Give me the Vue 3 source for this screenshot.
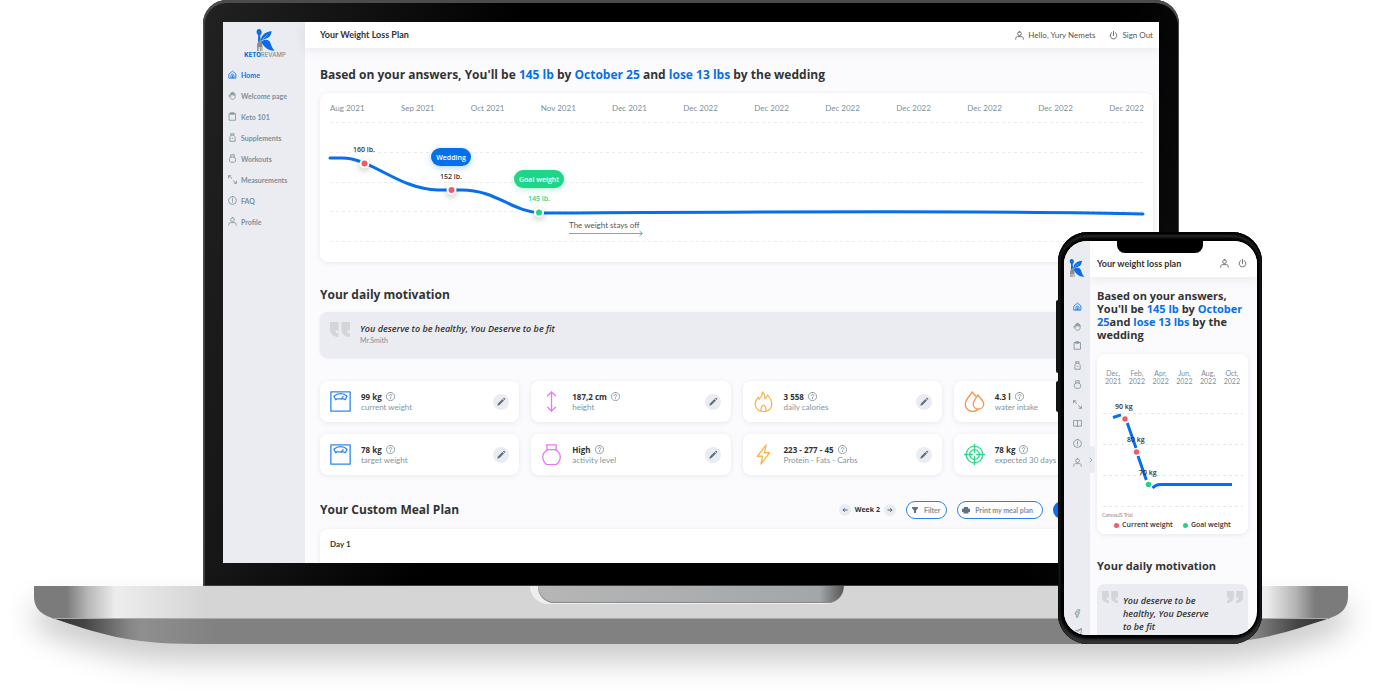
<script setup>
import { h } from 'vue'

const shapes = {
  home: ['M3 10.5 12 3l9 7.500V21.500H3z', 'M8 21v-6a4 4 0 0 1 8 0v6', 'M12 15v6'],
  hand: ['M7 13V6.500a1.500 1.500 0 0 1 3 0V11V4.500a1.500 1.500 0 0 1 3 0V11V5.500a1.500 1.500 0 0 1 3 0V12V8.500a1.500 1.500 0 0 1 3 0V15c0 4-2.500 7-6.500 7S7 20 5 17l-3-4c0-2 2.500-2 3.500-.5L7 14'],
  clipboard: ['M4 4h16v18H4z', 'M8 2h8v4H8z'],
  bottle: ['M8 2h8v4H8z', 'M8 7c-2 2-3 3-3 6v9h14v-9c0-3-1-4-3-6', 'M11 14h2'],
  kettlebell: ['M8 9 7 2h10l-1 7', 'M8 8a8 8 0 0 0-1 14h10a8 8 0 0 0-1-14z'],
  resize: ['M1.500 8V2h6', 'M2 2l8 7', 'M22.500 16v6h-6', 'M22 22l-8-7'],
  info: ['M12 1.500a10.500 10.500 0 1 0 0 21a10.500 10.500 0 0 0 0-21z', 'M12 7v6', 'M12 16v1'],
  user: ['M12 2a5 5 0 1 0 0 10a5 5 0 0 0 0-10z', 'M2 22v-2c0-3 2-5 5-5h10c3 0 5 2 5 5v2'],
  book: ['M12 5C9 3.500 6 3.500 1.500 4v15c4.500-.5 7.500-.5 10.500 1c3-1.500 6-1.500 10.500-1V4C18 3.500 15 3.500 12 5z', 'M12 5v15'],
  power: ['M7 4.500a9 9 0 1 0 10 0', 'M12 1v11'],
  facebook: ['M17 2h-3c-3 0-5 2-5 5v3H6v4h3v8h4v-8h3l1-4h-4V7c0-1 .5-1.500 1.500-1.500H17z'],
  plane: ['M22 2 1.500 10l6 3.500L10 22l4-5 5 3z', 'M22 2 7.500 13.500'],
  help: ['M12 1a11 11 0 1 0 0 22a11 11 0 0 0 0-22z', 'M8.500 9.500c0-4.500 7-4.500 7 0c0 2.500-3.500 2-3.500 4.500', 'M12 17v1'],
  chevron: ['M8 4l8 8-8 8'],
  scale: ['M1 1h22v22H1z', 'M4.500 6c4-4 11-4 15 0l-2 4-2-1H8l-1.500 1z', 'M13 9l2-2.500'],
  height: ['M12 1v22', 'M7.500 5.500 12 1l4.500 4.500', 'M7.500 18.500 12 23l4.500-4.500'],
  flame: ['M11 1c-.5 4-2 6.500-4 8.500L6 7C4 9.500 2.500 11.500 2.500 15c0 5 4 8.500 9.500 8.500s9.500-3.500 9.500-8.500c0-4.500-2-7-5-10.500-.5 2-1 3-2.500 4.500C13 6 13.500 3.500 11 1z', 'M9.500 23c-1-3.500.5-6 2.500-7 2 1 3.500 3.500 2.500 7'],
  bolt: ['M15 1 5 14h6l-2 9 10-13h-6z'],
  drops: ['M16 21c-6 5-14.500 1-14.500-6C1.500 9.500 7 5.500 9.500 1c1 2 2.500 3.500 4 5', 'M16 4.500c2 3.500 6.500 6 6.500 10.500 0 3-2.500 5.500-6 5.500s-6-2.500-6-5.500c0-4.500 3.500-7 5.500-10.500z'],
  target: ['M12 2.500a9.500 9.500 0 1 0 0 19a9.500 9.500 0 0 0 0-19z', 'M12 6.500a5.500 5.500 0 1 0 0 11a5.500 5.500 0 0 0 0-11z', 'M12 .5v9', 'M12 14.500v9', 'M.5 12h9', 'M14.500 12h9'],
  weight: ['M7 7 6.500 1h11L17 7', 'M8 6.500A9.500 9.500 0 0 0 2 14.500c0 4 2 7 4.500 9h11c2.500-2 4.500-5 4.500-9a9.500 9.500 0 0 0-6-8z'],
}

const Icon = (props) =>
  h(
    'svg',
    {
      viewBox: '0 0 24 24',
      fill: 'none',
      stroke: 'currentColor',
      'stroke-width': props.weight || 2.2,
      'stroke-linejoin': 'round',
      'stroke-linecap': 'round',
      'aria-hidden': 'true',
    },
    shapes[props.name].map((d) => h('path', { d })),
  )
Icon.props = ['name', 'weight']

const Logo = () =>
  h('svg', { viewBox: '0 0 19 22', 'aria-hidden': 'true' }, [
    h('path', { fill: '#0b6be8', d: 'M3 0C1.300 0 .5 1.500.6 3.200.8 4.800 1.600 5.600 2.200 6.100L2 13.500 4.700 11 4.200 6.100C5.100 5.500 5.700 4.500 5.700 3.200 5.700 1.500 4.700 0 3 0z' }),
    h('path', { fill: '#0b6be8', d: 'M4.600 12C5.500 6.500 8.500 2.500 15.800 2.200 15.200 3.400 15.200 4.800 14.300 6.600 12.600 9.600 8.500 9.600 4.600 12z' }),
    h('path', { fill: '#0b6be8', d: 'M5 12.500C9 9.800 13 10.200 14.300 13.600 15.200 16.700 16.500 19.700 18.600 21.600 12.500 22 8.500 19 5 12.500z' }),
    h('path', { fill: '#8a8a8c', d: 'M1 22V16.800C1 13.500 3 11.500 6.300 10.800 5 12.800 6.400 14 6.400 16.800V22H5.500V18H4.800V22H3.900V18H3.100V22H2.400V18H1.900V22z' }),
    h('path', { stroke: '#ebecf2', 'stroke-width': 0.5, fill: 'none', d: 'M7 10 11.500 5.500' }),
  ])

const Quote = () =>
  h('svg', { viewBox: '0 0 20 15', fill: 'currentColor', 'aria-hidden': 'true' }, [
    h('path', { d: 'M0 0h8.500v8.500H5.500c0 2 1 3 3 3V15C3.500 15 0 12 0 7.500z' }),
    h('path', { d: 'M11.500 0H20v8.500h-3c0 2 1 3 3 3V15c-5 0-8.500-3-8.500-7.500z' }),
  ])

const menu = [
  { icon: 'home', label: 'Home' },
  { icon: 'hand', label: 'Welcome page' },
  { icon: 'clipboard', label: 'Keto 101' },
  { icon: 'bottle', label: 'Supplements' },
  { icon: 'kettlebell', label: 'Workouts' },
  { icon: 'resize', label: 'Measurements' },
  { icon: 'info', label: 'FAQ' },
  { icon: 'user', label: 'Profile' },
]
const phoneMenu = ['home', 'hand', 'clipboard', 'bottle', 'kettlebell', 'resize', 'book', 'info', 'user']

const months = ['Aug 2021', 'Sep 2021', 'Oct 2021', 'Nov 2021', 'Dec 2021', 'Dec 2022', 'Dec 2022', 'Dec 2022', 'Dec 2022', 'Dec 2022', 'Dec 2022', 'Dec 2022']
const phoneMonths = [['Dec,', '2021'], ['Feb,', '2022'], ['Apr,', '2022'], ['Jun,', '2022'], ['Aug,', '2022'], ['Oct,', '2022']]

const stats = [
  { icon: 'scale', tone: 'blue', value: '99 kg', label: 'current weight' },
  { icon: 'height', tone: 'pink', value: '187,2 cm', label: 'height' },
  { icon: 'flame', tone: 'amber', value: '3 558', label: 'daily calories' },
  { icon: 'drops', tone: 'orange', value: '4.3 l', label: 'water intake' },
  { icon: 'scale', tone: 'blue', value: '78 kg', label: 'target weight' },
  { icon: 'weight', tone: 'pink', value: 'High', label: 'activity level' },
  { icon: 'bolt', tone: 'amber', value: '223 - 277 - 45', label: 'Protein - Fats - Carbs' },
  { icon: 'target', tone: 'green', value: '78 kg', label: 'expected 30 days' },
]
</script>

<template>
  <div class="stage">
    <section class="laptop">
      <div class="lid">
        <div class="screen">
          <aside class="sidebar">
            <a class="brand" href="#" aria-label="Keto Revamp">
              <Logo class="brand-mark" />
              <span class="brand-name"><b>KETO</b>REVAMP</span>
            </a>
            <nav class="menu">
              <a v-for="(item, i) in menu" :key="item.label" href="#" :class="{ active: i === 0 }">
                <Icon :name="item.icon" class="menu-icon" />{{ item.label }}
              </a>
            </nav>
          </aside>

          <div class="main">
            <header class="topbar">
              <span class="page-name">Your Weight Loss Plan</span>
              <div class="account">
                <a href="#"><Icon name="user" class="account-icon" />Hello, Yury Nemets</a>
                <a href="#"><Icon name="power" class="account-icon" />Sign Out</a>
              </div>
            </header>

            <div class="content">
              <h1>Based on your answers, You'll be <em>145 lb</em> by <em>October 25</em> and <em>lose 13 lbs</em> by the wedding</h1>

              <div class="card chart">
                <div class="months">
                  <span v-for="(m, i) in months" :key="i">{{ m }}</span>
                </div>
                <svg class="plot" viewBox="0 0 833 147" role="img" aria-label="Weight forecast">
                  <g stroke="#ebebed" stroke-dasharray="3 3">
                    <path d="M10 7.500H823M10 37.500H823M10 67.500H823M10 96.500H823M10 126.500H823" />
                  </g>
                  <path class="curve" d="M10 43H22C52 43 78 74 118 75H142C176 75 192 97 222 98C420 97 700 95 823 99" />
                  <g class="dots">
                    <circle cx="44.500" cy="48.500" r="5" />
                    <circle cx="131.500" cy="75" r="5" />
                    <circle cx="219" cy="97.500" r="5" />
                  </g>
                  <circle cx="44.500" cy="48.500" r="3" fill="#f05b68" />
                  <circle cx="131.500" cy="75" r="3" fill="#f05b68" />
                  <circle cx="219" cy="97.500" r="3" fill="#1ed688" />
                  <rect class="pill-blue" x="111" y="33" width="40" height="18" rx="9" />
                  <rect class="pill-green" x="194" y="55" width="50" height="18" rx="9" />
                  <g text-anchor="middle" class="tags">
                    <text x="44" y="37">160 lb.</text>
                    <text x="131" y="64">152 lb.</text>
                    <text x="131" y="44.500" class="on-pill">Wedding</text>
                    <text x="219" y="67" class="on-pill">Goal weight</text>
                    <text x="219" y="86" class="goal-value">145 lb.</text>
                  </g>
                  <text class="note" x="249" y="113">The weight stays off</text>
                  <path d="M249 118.500H322M319.500 116 322.500 118.500 319.500 121" fill="none" stroke="#2bd98d" />
                </svg>
              </div>

              <h2>Your daily motivation</h2>
              <blockquote class="quote">
                <Quote class="quote-mark" />
                <div>
                  <p>You deserve to be healthy, You Deserve to be fit</p>
                  <cite>Mr.Smith</cite>
                </div>
              </blockquote>

              <div class="stats">
                <article v-for="(s, i) in stats" :key="i" class="card stat">
                  <Icon :name="s.icon" weight="1.500" :class="['stat-icon', s.tone]" />
                  <div class="stat-text">
                    <strong>{{ s.value }}
                      <button class="help" :aria-label="'About ' + s.label"><Icon name="help" /></button>
                    </strong>
                    <span>{{ s.label }}</span>
                  </div>
                  <button class="edit" :aria-label="'Edit ' + s.label">
                    <svg viewBox="0 0 16 16" aria-hidden="true"><path d="M4.300 11.700 4.900 9.500 9.400 5 11 6.600 6.500 11.100zM10 4.400 10.700 3.800Q11.100 3.500 11.500 3.900L12.100 4.500Q12.500 4.900 12.200 5.300L11.600 6z" fill="#5d7480" /></svg>
                  </button>
                </article>
              </div>

              <div class="meal-bar">
                <h2>Your Custom Meal Plan</h2>
                <div class="week">
                  <button aria-label="Previous week"><svg viewBox="0 0 12 12"><path d="M8.500 6H4M5.700 4.200 3.900 6l1.800 1.800" /></svg></button>
                  <b>Week 2</b>
                  <button aria-label="Next week"><svg viewBox="0 0 12 12"><path d="M3.500 6H8M6.300 4.200 8.100 6 6.300 7.800" /></svg></button>
                </div>
                <button class="outline">
                  <svg viewBox="0 0 8 8" aria-hidden="true"><path d="M1 1h6v1.200L5 4.500V7H3V4.500L1 2.200z" fill="currentColor" /></svg>Filter
                </button>
                <button class="outline print">
                  <svg viewBox="0 0 8 8" aria-hidden="true"><path d="M2 1h4v1.500h1q1 0 1 1V6H6.500v1.500h-5V6H0V3.500q0-1 1-1h1z" fill="currentColor" /></svg>Print my meal plan
                </button>
                <button class="solid" aria-label="Shopping list"></button>
              </div>
              <div class="card day">Day 1</div>
            </div>
          </div>
        </div>
      </div>

      <div class="base">
        <svg class="base-shape" viewBox="0 0 1314 58" preserveAspectRatio="none" aria-hidden="true">
          <defs>
            <linearGradient id="deck">
              <stop offset="0" stop-color="#7b7b7b" /><stop offset=".025" stop-color="#7b7b7b" />
              <stop offset=".04" stop-color="#b4b4b4" /><stop offset=".062" stop-color="#ededed" />
              <stop offset=".13" stop-color="#d5d5d5" /><stop offset=".87" stop-color="#d5d5d5" />
              <stop offset=".938" stop-color="#ededed" /><stop offset=".96" stop-color="#b4b4b4" />
              <stop offset=".975" stop-color="#7b7b7b" /><stop offset="1" stop-color="#7b7b7b" />
            </linearGradient>
            <linearGradient id="under">
              <stop offset="0" stop-color="#333" /><stop offset=".025" stop-color="#444" />
              <stop offset=".06" stop-color="#858585" /><stop offset=".07" stop-color="#8f8f8f" />
              <stop offset=".13" stop-color="#818181" /><stop offset=".87" stop-color="#818181" />
              <stop offset=".93" stop-color="#8f8f8f" /><stop offset=".94" stop-color="#858585" />
              <stop offset=".975" stop-color="#444" /><stop offset="1" stop-color="#333" />
            </linearGradient>
          </defs>
          <path d="M0 0H1314V11C1314 20 1309 28 1296 32H18C5 28 0 20 0 11z" fill="url(#deck)" />
          <path d="M18 32H1296C1250 47 1222 58 1152 58H162C92 58 64 47 18 32z" fill="url(#under)" />
          <path d="M20 32.500H1294" stroke="#aaa" />
        </svg>
        <div class="thumb"><div class="thumb-inner"></div></div>
      </div>
    </section>

    <section class="phone">
      <i class="side-key"></i>
      <i class="side-key short"></i>
      <div class="phone-screen">
        <div class="notch"></div>
        <aside class="rail">
          <a href="#" aria-label="Keto Revamp"><Logo class="rail-logo" /></a>
          <nav class="rail-menu">
            <a v-for="(name, i) in phoneMenu" :key="name" href="#" :aria-label="name" :class="{ active: i === 0 }"><Icon :name="name" /></a>
          </nav>
          <div class="rail-social">
            <a href="#" aria-label="Facebook"><Icon name="facebook" /></a>
            <a href="#" aria-label="Telegram"><Icon name="plane" /></a>
          </div>
          <button class="expand" aria-label="Expand menu"><Icon name="chevron" weight="3" /></button>
        </aside>
        <div class="phone-main">
          <header class="phone-top">
            <span>Your weight loss plan</span>
            <a href="#" aria-label="Profile"><Icon name="user" /></a>
            <a href="#" aria-label="Sign out"><Icon name="power" /></a>
          </header>
          <div class="phone-content">
            <h2 class="phone-title">Based on your answers,<br />You'll be <em>145 lb</em> by <em>October<br />25</em>and <em>lose 13 lbs</em> by the<br />wedding</h2>
            <div class="card phone-chart">
              <div class="phone-months">
                <span v-for="m in phoneMonths" :key="m[0]">{{ m[0] }}<br />{{ m[1] }}</span>
              </div>
              <svg viewBox="0 0 151 131" role="img" aria-label="Weight chart">
                <path d="M6 28.500H146M6 59.500H146M6 90.500H146M6 121.500H146" stroke="#e6e7e9" stroke-dasharray="3 3" />
                <path d="M16 32.500 24 29.800M30.300 38 39 63M41 71 49.300 95M55.500 103Q59 99.500 63 99.500H135" fill="none" stroke="#0670ea" stroke-width="3" />
                <circle cx="28" cy="34" r="2.700" fill="#f05b68" />
                <circle cx="39.500" cy="67" r="2.700" fill="#f05b68" />
                <circle cx="51.500" cy="99.500" r="2.700" fill="#1ed688" />
                <g class="tags">
                  <text x="18" y="24">90 kg</text>
                  <text x="30" y="57">80 kg</text>
                  <text x="42" y="90">70 kg</text>
                </g>
              </svg>
              <small>CanvasJS Trial</small>
              <ul class="legend">
                <li>Current weight</li>
                <li class="goal">Goal weight</li>
              </ul>
            </div>
            <h2>Your daily motivation</h2>
            <blockquote class="phone-quote">
              <Quote class="mark" />
              <p>You deserve to be<br />healthy, You Deserve<br />to be fit</p>
              <Quote class="mark flip" />
            </blockquote>
          </div>
        </div>
      </div>
    </section>
  </div>
</template>

<style>
body { background: #fff; }
</style>

<style scoped>
* { box-sizing: border-box; }
.stage {
  position: relative;
  overflow: hidden;
  padding: 0 34px 47px;
  font: 8px/10px Lato, "Open Sans", sans-serif;
  color: #333;
}
h1, h2, p, ul, blockquote { margin: 0; padding: 0; }
a { color: inherit; text-decoration: none; }
em { font-style: normal; color: #0670ea; }
button { font: inherit; color: inherit; border: 0; padding: 0; background: none; cursor: pointer; }
svg { display: block; }
.card { background: #fff; border-radius: 8px; box-shadow: 0 1px 5px rgba(60, 70, 100, .1); }

/* laptop */
.lid {
  margin: 0 169px;
  padding: 22px 20px 23px;
  border-radius: 24px 24px 0 0;
  box-shadow: inset 0 2px 0 1px #4b4b4b, inset 1px 0 0 1px #3d3d3d;
  background: linear-gradient(100deg, #222 0, #000 30%, #000 85%, #111 100%);
}
.screen { display: flex; background: #fbfbfd; overflow: hidden; }
.sidebar { flex: 0 0 82px; background: #ebecf2; padding: 7px 3px 0 5px; }
.brand { display: flex; flex-direction: column; align-items: center; }
.brand-mark { width: 19px; height: 22px; }
.brand-name { font: 500 6px/8px Inter, sans-serif; color: #8a8a8c; }
.brand-name b { font-weight: 800; color: #0b6be8; }
.menu { display: flex; flex-direction: column; padding-top: 5px; }
.menu a { display: flex; align-items: center; gap: 4px; height: 21px; font-size: 7px; font-weight: 700; color: #7c909a; }
.menu a.active { color: #0b72ee; }
.menu-icon { width: 9px; height: 9px; }

.main { flex: 1; min-width: 0; }
.topbar { display: flex; align-items: center; justify-content: space-between; height: 26px; padding: 0 6px 0 15px; background: #fff; box-shadow: 0 2px 12px rgba(60, 70, 100, .1); }
.page-name { font-size: 9px; font-weight: 700; }
.account { display: flex; gap: 14px; color: #555; }
.account a { display: flex; align-items: center; gap: 4px; }
.account-icon { width: 9px; height: 9px; }

.content { padding: 0 6px 0 15px; }
h1, h2 { font-family: "Open Sans", sans-serif; font-size: 12px; line-height: 16px; font-weight: 700; }
h1 { padding: 19px 0 10px; }
.chart { overflow: hidden; }
.months { display: flex; justify-content: space-between; padding: 10px 9px 2px 10px; color: #7c909a; }
.plot { width: 100%; }
.curve { fill: none; stroke: #0670ea; stroke-width: 3; stroke-linecap: round; }
.dots { fill: #fff; filter: drop-shadow(0 2px 3px rgba(0, 0, 0, .25)); }
.pill-blue { fill: #0670ea; filter: drop-shadow(0 2px 3px rgba(6, 112, 234, .3)); }
.pill-green { fill: #1ed688; filter: drop-shadow(0 2px 3px rgba(30, 214, 136, .3)); }
.tags { font-family: "Open Sans", sans-serif; font-size: 7px; font-weight: 600; fill: #333; }
.tags .on-pill { fill: #fff; }
.tags .goal-value { fill: #1ed688; }
.note { font-size: 8px; fill: #555; }

.chart + h2 { padding: 25px 0 9px; line-height: 16px; }
.quote { display: flex; gap: 10px; padding: 10px; min-height: 45px; background: #ebecf1; border-radius: 8px; box-shadow: 0 1px 3px rgba(60, 70, 100, .12); }
.quote-mark { width: 20px; height: 15px; color: #d3d5d9; }
.quote p { font-family: "Open Sans", sans-serif; font-size: 9px; line-height: 13px; font-weight: 600; font-style: italic; }
.quote cite { font-size: 7px; line-height: 11px; font-style: normal; color: #7c909a; display: block; }

.stats { display: grid; grid-template-columns: repeat(4, 1fr); gap: 12px; padding: 24px 0 26px; }
.stat { display: flex; align-items: center; gap: 10px; height: 41px; padding: 0 10px; }
.stat-icon { flex: none; width: 21px; height: 21px; }
.blue { color: #2f86ee; }
.pink { color: #e879f5; }
.amber { color: #fbb552; }
.orange { color: #fb9150; }
.green { color: #2bd98d; }
.stat-text { flex: 1; min-width: 0; white-space: nowrap; }
.stat-text strong { display: flex; align-items: center; gap: 4px; font-family: "Open Sans", sans-serif; }
.stat-text span { display: block; color: #8295a0; }
.help { width: 9px; height: 9px; color: #7c909a; }
.edit { flex: none; width: 16px; height: 16px; border-radius: 8px; background: #ebecf2; }

.meal-bar { display: flex; align-items: center; gap: 10px; height: 18px; margin-bottom: 10px; }
.meal-bar h2 { flex: 1; }
.week { display: flex; align-items: center; gap: 4px; font-family: "Open Sans", sans-serif; font-size: 7px; }
.week button { width: 12px; height: 12px; border-radius: 6px; background: #ebecf2; }
.week path { fill: none; stroke: #4d626d; stroke-width: 1; }
.outline { display: flex; align-items: center; gap: 5px; height: 18px; padding: 0 6px 0 4px; border: 1px solid #2a80ee; border-radius: 9px; font-size: 7px; font-weight: 700; color: #7c909a; background: #fff; }
.outline.print { padding-right: 9px; }
.outline svg { width: 8px; height: 8px; color: #5d7480; }
.solid { width: 100px; height: 18px; border-radius: 9px; background: #0670ea; }
.day { padding: 10px 10px 14px; font-weight: 700; border-radius: 8px 8px 0 0; }

.base { position: relative; filter: drop-shadow(0 18px 14px rgba(0, 0, 0, .2)); }
.base-shape { width: 100%; height: 58px; }
.thumb { position: absolute; top: 0; left: 50%; width: 314px; height: 18px; margin-left: -161px; padding-left: 8px; background: #eee; border-radius: 0 0 18px 18px; overflow: hidden; }
.thumb-inner { height: 17px; border-radius: 0 0 16px 16px; background: linear-gradient(90deg, #b6b6b6, #a3a7aa 92%, #555 100%); box-shadow: inset 0 -1px 1px #888; }

/* phone */
.phone { position: absolute; top: 232px; right: 120px; width: 204px; padding: 9px 5px 9px 6px; border-radius: 30px; background: #000; box-shadow: inset 0 2px 2px 1px #000, inset 0 -4px 3px 1px #333, inset 0 4px 3px 1px #333; }
.side-key { position: absolute; left: -2px; top: 68px; width: 3px; height: 73px; background: #111; border-radius: 2px 0 0 2px; }
.side-key.short { top: 149px; height: 31px; }
.phone-screen { position: relative; display: flex; overflow: hidden; border-radius: 23px; background: #fbfbfd; }
.notch { position: absolute; top: -1px; left: 53px; width: 86px; height: 13px; border-radius: 0 0 8px 8px; background: #000; z-index: 2; }
.rail { position: relative; flex: 0 0 26px; display: flex; flex-direction: column; align-items: center; padding-top: 18px; background: #ebecf2; color: #7c909a; }
.rail-logo { width: 16px; height: 18px; }
.rail-menu { display: flex; flex-direction: column; justify-content: space-between; height: 175px; margin-top: 20px; }
.rail-menu a, .rail-social a { display: block; height: 19px; padding: 5px 0; }
.rail-menu svg, .rail-social svg { width: 9px; height: 9px; }
.rail-menu .active { color: #0b72ee; }
.rail-social { margin-top: auto; margin-bottom: -7px; }
.expand { position: absolute; right: -5px; top: 205px; width: 8px; height: 27px; padding: 0 1px; border-radius: 0 4px 4px 0; background: #ebecf2; z-index: 1; }
.expand svg { width: 6px; height: 6px; }
.phone-main { flex: 1; min-width: 0; }
.phone-top { display: flex; align-items: center; gap: 9px; height: 36px; padding: 9px 10px 0 7px; background: #fff; box-shadow: 0 2px 10px rgba(60, 70, 100, .1); }
.phone-top span { flex: 1; font-size: 9px; font-weight: 700; white-space: nowrap; }
.phone-top svg { width: 9px; height: 9px; color: #555; }
.phone-content { padding: 12px 9px 0 7px; }
.phone-content h2 { font-size: 11px; line-height: 13px; white-space: nowrap; }
.phone-chart { margin: 13px 0 25px; padding-bottom: 4px; }
.phone-months { display: flex; justify-content: space-between; padding: 15px 8px 0; font-size: 7px; line-height: 8px; color: #7c909a; text-align: center; }
.phone-chart small { display: block; margin: -4px 0 2px; padding-left: 5px; font-size: 5px; line-height: 6px; color: #888; }
.phone-chart svg { width: 100%; }
.legend { display: flex; justify-content: center; gap: 10px; list-style: none; font-family: "Open Sans", sans-serif; font-size: 7px; font-weight: 600; line-height: 10px; }
.legend li { display: flex; align-items: center; gap: 3px; white-space: nowrap; }
.legend li::before { content: ""; width: 5px; height: 5px; border-radius: 50%; background: #f05b68; }
.legend .goal::before { background: #1ed688; }
.phone-quote { display: flex; justify-content: space-between; margin-top: 12px; padding: 7px 5px 2px; background: #ebecf1; border-radius: 8px 8px 0 0; }
.phone-quote p { flex: 1; padding: 3px 0 0 5px; font-family: "Open Sans", sans-serif; font-size: 9px; line-height: 13px; font-weight: 600; font-style: italic; white-space: nowrap; }
.mark { width: 16px; height: 12px; color: #d3d5d9; }
.flip { transform: scaleX(-1); }
</style>
